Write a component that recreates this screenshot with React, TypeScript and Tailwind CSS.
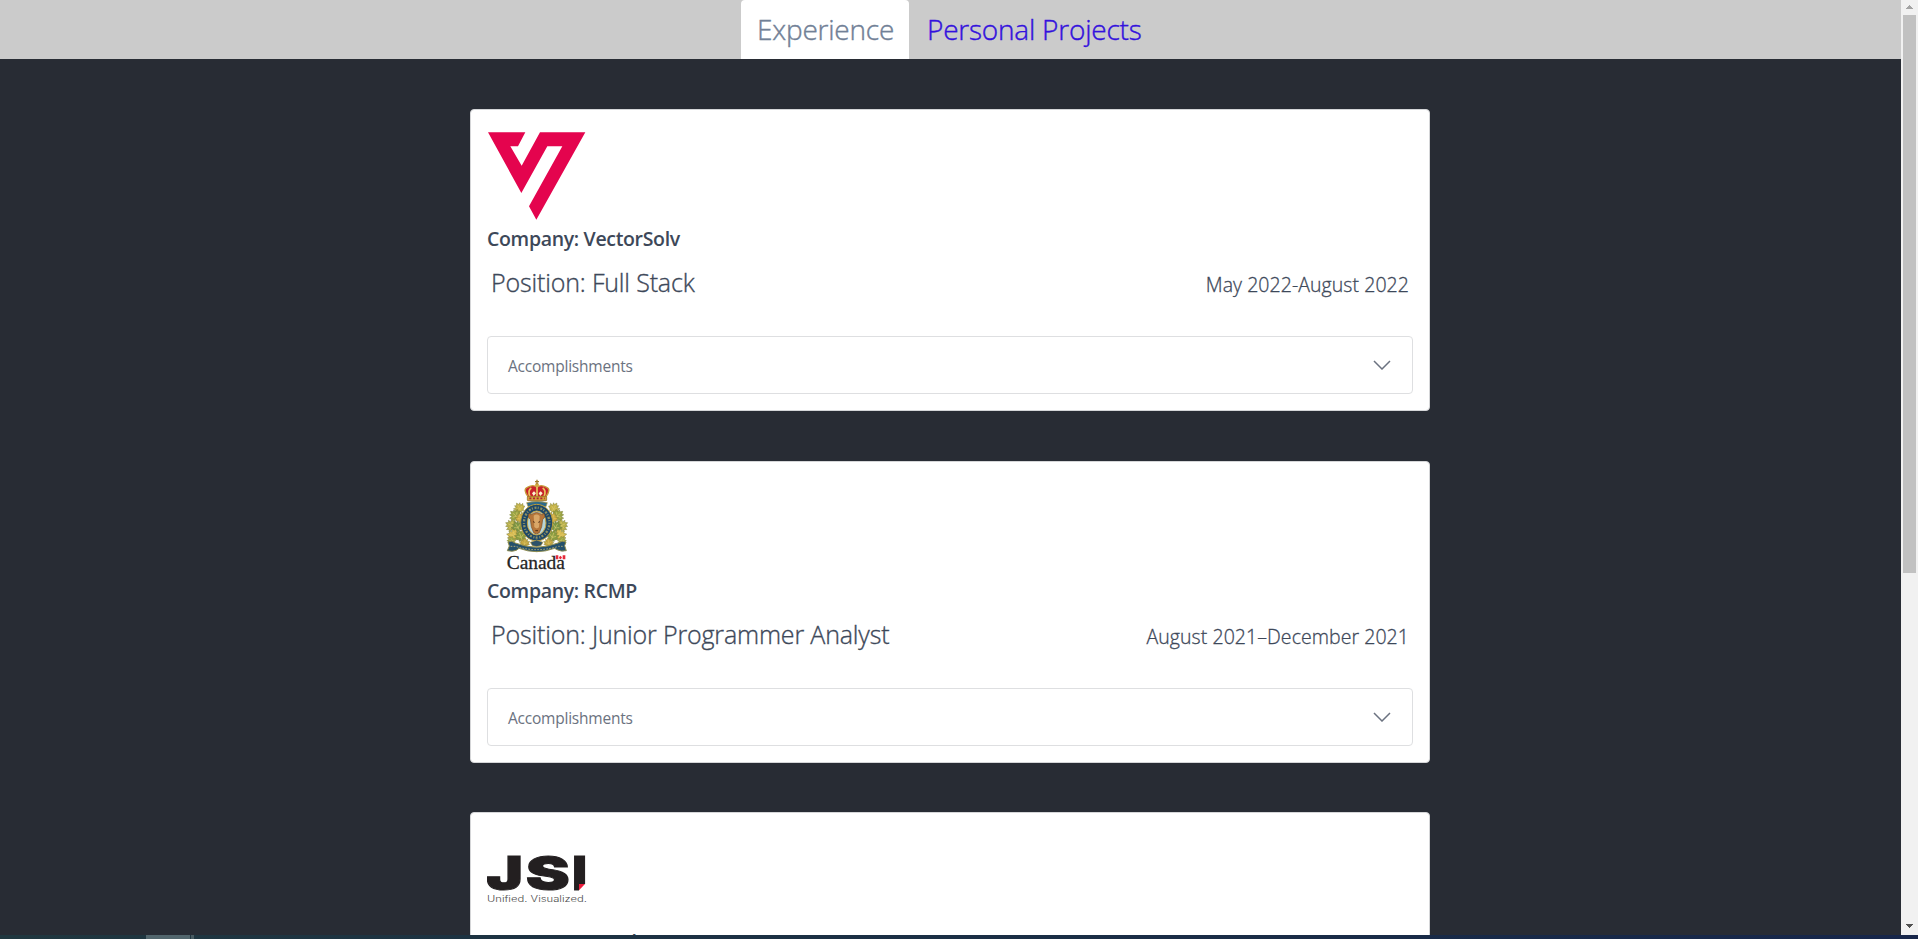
import React from "react";

function VectorSolvLogo() {
  return (
    <svg viewBox="81 78 300 294" className="block h-[98px] w-[100px]">
      <path
        fill="#e4044e"
        d="M84 97H196L174 139H151L185 197L240 97H376L229 359L207 319L307 139H262L184 279Z"
      />
    </svg>
  );
}

const LEAF =
  "M0 -17L4 -10L9 -13L8 -5L16 -7L13 0L17 3L8 9L9 13L1 11L0 18L-2 11L-9 13L-8 8L-17 3L-13 0L-16 -7L-8 -5L-9 -13L-4 -10Z";

const LEAVES: [number, number, number, number, string][] = [
  [88, 128, 1, -30, "#c4b349"],
  [76, 150, 1.1, -50, "#9aa545"],
  [92, 158, 1, -20, "#d1ad45"],
  [64, 180, 1.1, -65, "#b9b14d"],
  [82, 184, 1.1, -30, "#7a9545"],
  [70, 210, 1.2, -80, "#d8bb52"],
  [92, 212, 1.1, -20, "#8a9c42"],
  [64, 226, 0.8, -90, "#9aa545"],
  [104, 232, 0.9, 10, "#c2a440"],
];

function RcmpLogo() {
  return (
    <svg viewBox="-9 38 300 294" className="block h-[98px] w-[100px]">
      {[false, true].map((flip) => (
        <g key={String(flip)} transform={flip ? "translate(280 0) scale(-1 1)" : undefined}>
          {LEAVES.map(([x, y, s, r, fill], i) => (
            <g key={i} transform={`translate(${x} ${y}) rotate(${r}) scale(${s})`}>
              <path d={LEAF} fill={fill} stroke="#7c7f35" strokeWidth="1.2" />
              <path d="M0 14V-9M0 4L-9 -2M0 4L9 -2" stroke="#e2cf70" strokeWidth="1.5" fill="none" />
            </g>
          ))}
        </g>
      ))}
      <path d="M110 112Q141 104 172 112L168 124Q141 116 114 124Z" fill="#2d6a8c" stroke="#b99b3c" strokeWidth="2" />
      <path d="M114 94Q98 72 112 66Q130 56 141 66Q152 56 170 66Q184 72 168 94Z" fill="#c8232c" stroke="#c79a3a" strokeWidth="4" />
      <path d="M120 94Q112 76 124 68M162 94Q170 76 158 68M141 64V94" stroke="#e8c95e" strokeWidth="5" fill="none" />
      <path d="M131 92L126 84L132 78L138 84ZM151 92L146 84L152 78L158 84Z" fill="#fff3d0" />
      <rect x="112" y="93" width="58" height="13" rx="2" fill="#d1a139" stroke="#8d6421" strokeWidth="2" />
      <path d="M118 99H164" stroke="#ad2534" strokeWidth="5" strokeDasharray="6 5" />
      <circle cx="141" cy="59" r="6" fill="#d2a941" />
      <path d="M141 43V57M135 49H147" stroke="#9f7b2b" strokeWidth="4" />
      <ellipse cx="140" cy="172" rx="48" ry="55" fill="#1d4768" stroke="#b99b3c" strokeWidth="3" />
      <ellipse cx="140" cy="172" rx="38" ry="45" fill="none" stroke="#8f9163" strokeWidth="7" strokeDasharray="3 5 6 4" />
      <ellipse cx="140" cy="173" rx="28" ry="36" fill="#b8d5d6" stroke="#c5a342" strokeWidth="3" />
      <path
        d="M122 149Q117 140 115 150Q116 160 121 162L124 184L131 202Q139 209 148 202L155 184L158 162Q164 160 164 150Q161 140 157 149Q140 134 122 149Z"
        fill="#b5763a"
        stroke="#7c4d24"
        strokeWidth="2"
      />
      <path d="M131 151Q140 144 149 152L147 186Q140 193 133 185Z" fill="#d9a768" />
      <path d="M129 169L134 171M145 171L150 169M136 196H144" stroke="#4c2d17" strokeWidth="3" />
      <path
        d="M54 230Q65 224 76 233Q140 258 204 233Q217 224 228 230L224 241L229 256Q214 260 201 253L194 249Q140 269 87 249L79 255Q67 260 52 256L58 242Z"
        fill="#24506c"
        stroke="#8f8c4f"
        strokeWidth="3"
      />
      <path d="M62 243L76 243Q140 263 206 243L222 243" stroke="#a9a778" strokeWidth="3" strokeDasharray="5 4" fill="none" />
      <path d="M121 231L140 224L159 231L153 241L140 244L127 241Z" fill="#2d526a" stroke="#c6a846" strokeWidth="2" />
      <text
        x="50"
        y="311"
        textLength="175"
        lengthAdjust="spacingAndGlyphs"
        fontSize="57"
        fill="#242424"
        stroke="#242424"
        strokeWidth="0.8"
        fontFamily="Liberation Serif, serif"
      >
        Canada
      </text>
      <path d="M197 270H205V282H197ZM218 270H226V282H218ZM207 276L211 271L216 276L213 281H209Z" fill="#e52a3a" />
    </svg>
  );
}

function JsiLogo() {
  return (
    <svg viewBox="81 87 300 294" className="block h-[98px] w-[100px]">
      <g fill="#231f20" stroke="#231f20" strokeWidth="3" fontWeight="900" className="font-[Inter,sans-serif]">
        <text x="79" y="270" fontSize="140" textLength="110" lengthAdjust="spacingAndGlyphs">J</text>
        <text x="197" y="270" fontSize="140" textLength="132" lengthAdjust="spacingAndGlyphs">S</text>
        <text x="337" y="270" fontSize="140" textLength="44" lengthAdjust="spacingAndGlyphs">I</text>
      </g>
      <path d="M357 252H379V275H357Z" fill="#fff" />
      <path d="M357 252H375L357 271Z" fill="#ee1c3c" />
      <text
        x="81"
        y="306"
        fontSize="26"
        fontWeight="300"
        textLength="300"
        lengthAdjust="spacingAndGlyphs"
        fill="#4c4c4c"
        className="font-[Inter,sans-serif]"
      >
        Unified. Visualized.
      </text>
    </svg>
  );
}

interface JobProps {
  logo: React.ReactNode;
  company: string;
  position: string;
  dates: string;
}

function JobCard({ logo, company, position, dates }: JobProps) {
  return (
    <article className="h-[302px] w-[960px] shrink-0 rounded border border-[#d5d6d8] bg-white p-4 text-[#3d4859]">
      {logo}
      <h2 className="h-[30px] text-[19.5px] leading-[30px] font-semibold tracking-[-0.33px] whitespace-nowrap">
        Company: {company}
      </h2>
      <div className="flex h-[82px] items-baseline justify-between pt-2.5 pr-1 pl-1 whitespace-nowrap">
        <p className="text-[25px] leading-[36px] font-light tracking-[-0.16px] [-webkit-text-stroke:0.35px]">
          Position: {position}
        </p>
        <p className="text-[19.5px] leading-[30px] font-light tracking-[0.06px] [-webkit-text-stroke:0.3px]">{dates}</p>
      </div>
      <button className="flex h-[58px] w-full items-center justify-between rounded border border-[#dedfe1] pr-[21px] pl-5 text-[#6b7280]">
        <span className="pt-0.5 text-[15.5px] leading-6 tracking-[-0.22px]">Accomplishments</span>
        <svg viewBox="0 0 18 10" className="h-[10px] w-[18px]" fill="none" stroke="#6b7280" strokeWidth="1.5">
          <path d="M1 1L9 9L17 1" />
        </svg>
      </button>
    </article>
  );
}

function ScrollBar() {
  return (
    <div className="flex w-[17px] shrink-0 flex-col items-center bg-[#f1f1f1]">
      <svg viewBox="0 0 17 15" className="h-[15px] w-[17px]">
        <path d="M5 9H12V8H11V7H10V6H9V5H8V6H7V7H6V8H5Z" fill="#a3a3a3" />
      </svg>
      <div className="h-[558px] w-[13px] bg-[#c1c1c1]" />
      <div className="grow" />
      <svg viewBox="0 0 17 15" className="h-[15px] w-[17px]">
        <path d="M5 4H12V5H11V6H10V7H9V8H8V7H7V6H6V5H5Z" fill="#505050" />
      </svg>
    </div>
  );
}

export default function App() {
  return (
    <div className="flex h-[939px] w-[1918px] flex-col overflow-hidden bg-[#282c34] font-['Open_Sans','Noto_Sans',sans-serif]">
      <div className="flex h-[935px] shrink-0">
        <div className="flex w-[1901px] flex-col overflow-hidden">
          <nav className="flex h-[59px] shrink-0 bg-[#cbcbcb] pl-[741px] text-[28px] leading-[58px] font-light tracking-[-0.22px] whitespace-nowrap [-webkit-text-stroke:0.4px]">
            <a className="w-[168px] rounded-t bg-white pl-4 text-[#718096]">Experience</a>
            <a className="pl-[18px] text-[#3311dd]">Personal Projects</a>
          </nav>
          <main className="flex flex-col items-center gap-[49.5px] pt-[50px] pr-px">
            <JobCard
              logo={<VectorSolvLogo />}
              company="VectorSolv"
              position="Full Stack"
              dates="May 2022-August 2022"
            />
            <JobCard
              logo={<RcmpLogo />}
              company="RCMP"
              position="Junior Programmer Analyst"
              dates="August 2021–December 2021"
            />
            <JobCard
              logo={<JsiLogo />}
              company="JSI Telecom"
              position="Software Developer"
              dates="January 2021–April 2021"
            />
          </main>
        </div>
        <ScrollBar />
      </div>
      <div className="flex h-1 shrink-0 bg-linear-to-r from-[#20373f] to-[#17264a]">
        <div className="ml-[146px] w-[44px] bg-[#52666d]" />
        <div className="ml-px w-[3px] bg-[#485a61]" />
      </div>
    </div>
  );
}
